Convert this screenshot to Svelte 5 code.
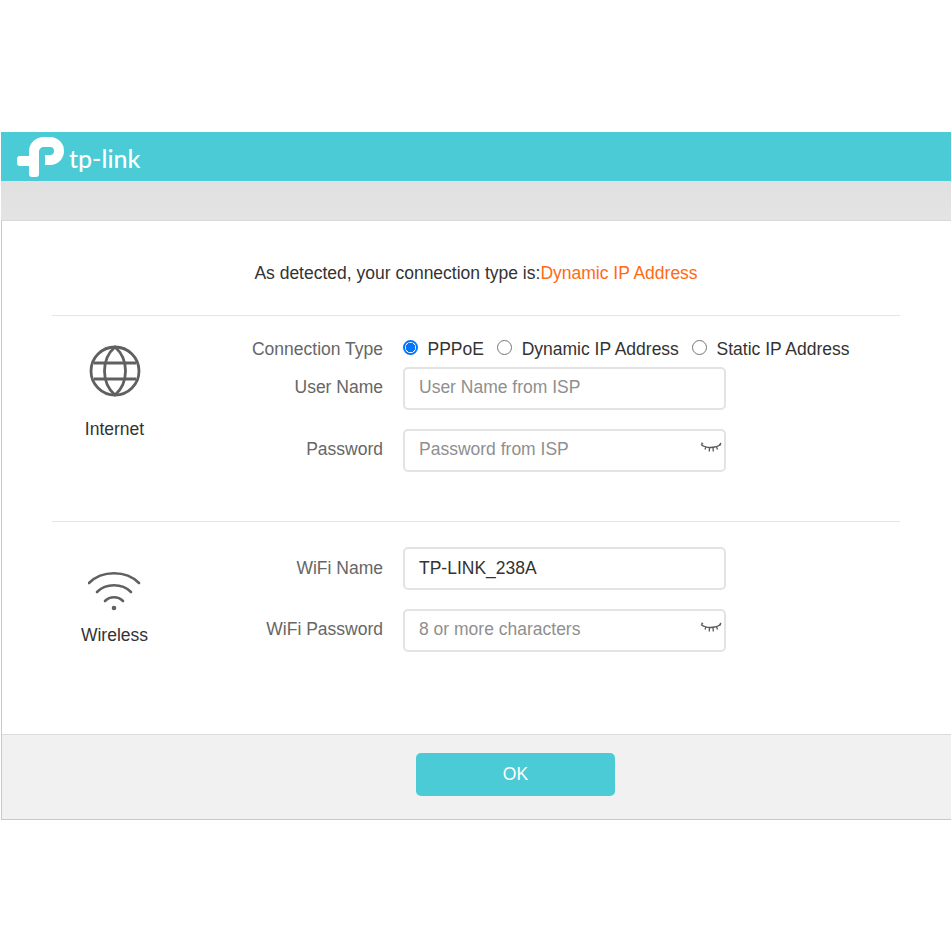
<script>
	const connectionTypes = [
		{ label: 'PPPoE', checked: true },
		{ label: 'Dynamic IP Address', checked: false },
		{ label: 'Static IP Address', checked: false }
	];
</script>

{#snippet eye()}
	<svg class="eye" width="22" height="12" viewBox="0 0 22 12" fill="none" stroke="#5a5a5a" stroke-width="1.3">
		<path d="M1 2.5C6 6.5 15 6.5 21 2.5" />
		<path d="M3 2.2 1.5 0.8M6 4.6 5 7.5M9.5 5.6 9.3 9.5M13 5.6 13.3 9.5M16.5 4.6 17.5 7.5M19.5 3 21 1" />
	</svg>
{/snippet}

<div class="page">
	<header class="topbar">
		<svg class="logo" width="48" height="40" viewBox="0 0 48 40">
			<path d="M12 19V14C12 6 19 0 27 0H33A14 14 0 0 1 33 28H28V18H33A4 4 0 0 0 33 10H27C24 10 22 12 22 15V37A3 3 0 0 1 19 40H15A3 3 0 0 1 12 37V29H3A3 3 0 0 1 0 26V22A3 3 0 0 1 3 19Z" fill="#fff" />
		</svg>
		<span class="brand">tp-link</span>
	</header>
	<div class="subbar"></div>

	<main class="panel">
		<div class="content">
			<p class="detected">As detected, your connection type is:<span class="accent">Dynamic IP Address</span></p>

			<section class="section internet">
				<div class="side">
					<svg width="52" height="52" viewBox="0 0 52 52" fill="none" stroke="#606060" stroke-width="2.8">
						<circle cx="26" cy="26" r="24" />
						<path d="M26 2C12 14 12 38 26 50C40 38 40 14 26 2Z" />
						<path d="M5 18H47M5 34H47" />
					</svg>
					<span class="side-label">Internet</span>
				</div>
				<div class="fields">
					<div class="row radios">
						<span class="label">Connection Type</span>
						<div class="options">
							{#each connectionTypes as type}
								<label class="option">
									<span class="radio" class:checked={type.checked}></span>
									{type.label}
								</label>
							{/each}
						</div>
					</div>
					<div class="row raised">
						<span class="label">User Name</span>
						<div class="input placeholder">User Name from ISP</div>
					</div>
					<div class="row raised">
						<span class="label">Password</span>
						<div class="input placeholder">Password from ISP{@render eye()}</div>
					</div>
				</div>
			</section>

			<section class="section wireless">
				<div class="side">
					<svg width="54" height="42" viewBox="1 0 54 42" fill="none" stroke="#606060" stroke-width="2.6" stroke-linecap="round">
						<path d="M2 13C15 0 39 0 52 13" />
						<path d="M10 22C19 13 35 13 44 22" />
						<path d="M18 31C23 26 31 26 36 31" />
						<circle cx="27" cy="38" r="2.3" fill="#606060" stroke="none" />
					</svg>
					<span class="side-label">Wireless</span>
				</div>
				<div class="fields">
					<div class="row">
						<span class="label">WiFi Name</span>
						<div class="input value">TP-LINK_238A</div>
					</div>
					<div class="row raised">
						<span class="label">WiFi Password</span>
						<div class="input placeholder">8 or more characters{@render eye()}</div>
					</div>
				</div>
			</section>
		</div>

		<footer class="footer">
			<button class="ok">OK</button>
		</footer>
	</main>
</div>

<style>
	:global(body) {
		margin: 0;
		background: #fff;
	}

	.page {
		padding: 132px 0 0 1px;
		font-family: 'Liberation Sans', Arial, sans-serif;
		font-size: 17.5px;
		color: #333;
	}

	.topbar {
		display: flex;
		align-items: center;
		height: 49px;
		padding-left: 16px;
		background: #4acbd6;
		box-sizing: border-box;
	}

	.logo {
		flex: none;
	}

	.brand {
		margin: 3px 0 0 4px;
		font-family: Lato, sans-serif;
		font-size: 25px;
		font-weight: 500;
		color: #fff;
	}

	.subbar {
		height: 39px;
		background: linear-gradient(#e0e0e0, #e4e4e4);
	}

	.panel {
		border: 1px solid #c9c9c9;
		border-right: none;
		border-top-color: #d8d8d8;
		background: #fff;
	}

	.content {
		height: 513px;
		padding: 0 51px 0 50px;
		box-sizing: border-box;
	}

	.detected {
		margin: 0;
		height: 94px;
		padding-top: 41px;
		box-sizing: border-box;
		text-align: center;
		line-height: 22px;
		color: #333;
	}

	.accent {
		color: #ff6a13;
	}

	.section {
		display: flex;
		border-top: 1px solid #e6e6e6;
		height: 206px;
		box-sizing: border-box;
	}

	.section.wireless {
		height: 212px;
	}

	.side {
		flex: none;
		display: flex;
		flex-direction: column;
		align-items: center;
		width: 125px;
		color: #333;
	}

	.internet .side {
		padding-top: 29px;
	}

	.wireless .side {
		padding-top: 48px;
	}

	.side-label {
		margin-top: 22px;
		line-height: 20px;
	}

	.wireless .side-label {
		margin-top: 13px;
	}

	.fields {
		display: flex;
		flex-direction: column;
		gap: 19px;
	}

	.internet .fields {
		padding-top: 22px;
	}

	.wireless .fields {
		padding-top: 25px;
	}

	.row {
		display: flex;
		align-items: center;
		gap: 20px;
	}

	.row.radios {
		height: 22px;
		line-height: 20px;
		margin-bottom: -12px;
	}

	.raised .label,
	.raised .input {
		padding-bottom: 2px;
	}

	.label {
		width: 206px;
		text-align: right;
		color: #666;
	}

	.options {
		display: flex;
		gap: 13.2px;
	}

	.option {
		display: flex;
		align-items: center;
		gap: 9.5px;
		color: #333;
	}

	.radio {
		width: 13px;
		height: 13px;
		border: 1px solid #767676;
		border-radius: 50%;
		box-sizing: content-box;
		position: relative;
		top: -2px;
	}

	.radio.checked {
		border: 2px solid #0075ff;
		width: 11px;
		height: 11px;
		background: radial-gradient(circle, #0075ff 0 4.5px, #fff 5px);
	}

	.input {
		position: relative;
		display: flex;
		align-items: center;
		width: 323px;
		height: 43px;
		padding: 0 14px;
		border: 2px solid #e3e3e3;
		border-radius: 5px;
		box-sizing: border-box;
		background: #fff;
	}

	.placeholder {
		color: #8f8f8f;
	}

	.value {
		color: #333;
	}

	.eye {
		position: absolute;
		right: 2px;
		top: 11px;
	}

	.footer {
		display: flex;
		justify-content: center;
		height: 85px;
		padding: 18px 0 0 78px;
		box-sizing: border-box;
		border-top: 1px solid #dcdcdc;
		background: #f1f1f1;
	}

	.ok {
		width: 199px;
		height: 43px;
		border: none;
		border-radius: 5px;
		background: #4acbd6;
		color: #fff;
		font-family: inherit;
		font-size: 17.5px;
	}
</style>
